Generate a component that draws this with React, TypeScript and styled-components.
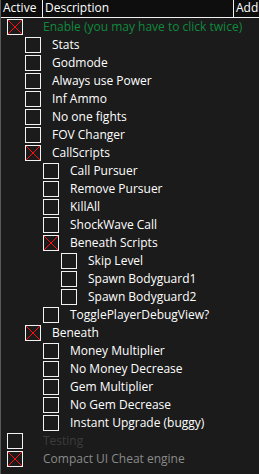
import React from "react";
import styled, { createGlobalStyle } from "styled-components";

const Global = createGlobalStyle`
  html, body { margin: 0; padding: 0; background: #1b1b1b; }
  body { font-family: "Open Sans", "Noto Sans", sans-serif; }
`;

const Table = styled.div`
  width: 259px;
  height: 474px;
  background: #1b1b1b;
  border-left: 1px solid #5a5a5a;
  box-sizing: border-box;
  overflow: hidden;
  display: flex;
  flex-direction: column;
`;

const Header = styled.div`
  display: flex;
  height: 17px;
  background: #0e0e0e;
  border-bottom: 1px solid #f0f0f0;
  flex-shrink: 0;
`;

const HeadCell = styled.div<{ $w?: number }>`
  ${(p) => (p.$w ? `width: ${p.$w}px;` : "flex: 1;")}
  flex-shrink: 0;
  box-sizing: border-box;
  padding-left: 2px;
  color: #ffffff;
  font-size: 12px;
  line-height: 16px;
  white-space: nowrap;
  overflow: hidden;
  border-right: 1px solid #f0f0f0;
  &:last-child { border-right: none; }
`;

const Row = styled.div<{ $depth: number }>`
  display: flex;
  align-items: center;
  height: 18px;
  flex-shrink: 0;
  padding-left: ${(p) => 6 + 18 * p.$depth}px;
`;

const Box = styled.div<{ $checked: boolean }>`
  width: 16px;
  height: 16px;
  box-sizing: border-box;
  border: 1px solid #f2f2f2;
  flex-shrink: 0;
  display: flex;
  svg { display: block; }
`;

const Label = styled.span<{ $depth: number; $tone: "normal" | "green" | "dim" | "grey" }>`
  margin-left: ${(p) => Math.max(42, 33 + 18 * p.$depth) - (22 + 18 * p.$depth)}px;
  font-size: 12px;
  line-height: 18px;
  white-space: nowrap;
  color: ${(p) =>
    p.$tone === "green"
      ? "#0f8a3d"
      : p.$tone === "dim"
      ? "#3b3b3b"
      : p.$tone === "grey"
      ? "#8a8a8a"
      : "#ffffff"};
`;

type Item = { t: string; d: number; c?: boolean; tone?: "normal" | "green" | "dim" | "grey" };

const items: Item[] = [
  { t: "Enable (you may have to click twice)", d: 0, c: true, tone: "green" },
  { t: "Stats", d: 1 },
  { t: "Godmode", d: 1 },
  { t: "Always use Power", d: 1 },
  { t: "Inf Ammo", d: 1 },
  { t: "No one fights", d: 1 },
  { t: "FOV Changer", d: 1 },
  { t: "CallScripts", d: 1, c: true },
  { t: "Call Pursuer", d: 2 },
  { t: "Remove Pursuer", d: 2 },
  { t: "KillAll", d: 2 },
  { t: "ShockWave Call", d: 2 },
  { t: "Beneath Scripts", d: 2, c: true },
  { t: "Skip Level", d: 3 },
  { t: "Spawn Bodyguard1", d: 3 },
  { t: "Spawn Bodyguard2", d: 3 },
  { t: "TogglePlayerDebugView?", d: 2 },
  { t: "Beneath", d: 1, c: true },
  { t: "Money Multiplier", d: 2 },
  { t: "No Money Decrease", d: 2 },
  { t: "Gem Multiplier", d: 2 },
  { t: "No Gem Decrease", d: 2 },
  { t: "Instant Upgrade (buggy)", d: 2 },
  { t: "Testing", d: 0, tone: "dim" },
  { t: "Compact UI Cheat engine", d: 0, c: true, tone: "grey" },
];

const Cross = () => (
  <svg width="14" height="14" viewBox="0 0 14 14">
    <path d="M0 0L14 14M14 0L0 14" stroke="#ff1010" strokeWidth="1" />
  </svg>
);

export default function App() {
  return (
    <>
      <Global />
      <Table>
        <Header>
          <HeadCell $w={42}>Active</HeadCell>
          <HeadCell $w={191}>Description</HeadCell>
          <HeadCell>Address</HeadCell>
        </Header>
        {items.map((it, i) => (
          <Row key={i} $depth={it.d}>
            <Box $checked={!!it.c}>{it.c && <Cross />}</Box>
            <Label $depth={it.d} $tone={it.tone ?? "normal"}>
              {it.t}
            </Label>
          </Row>
        ))}
      </Table>
    </>
  );
}
